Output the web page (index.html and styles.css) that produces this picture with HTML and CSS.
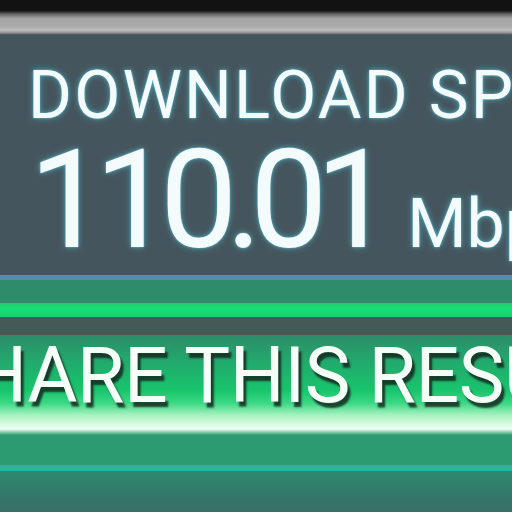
FILE: index.html
```html
<!DOCTYPE html>
<html>
<head>
<meta charset="utf-8">
<link rel="stylesheet" href="styles.css">
</head>
<body>
<div class="screen">
  <div class="topbar"></div>
  <div class="greyband"></div>
  <div class="panel">
    <div class="label">DOWNLOAD SPEED</div>
    <div class="value"><span class="num">110.01</span><span class="unit">Mbps</span></div>
  </div>
  <div class="blue-line"></div>
  <div class="green-band"></div>
  <div class="bright-band"></div>
  <div class="gap"></div>
  <div class="share">
    <div class="share-text">SHARE THIS RESULT</div>
  </div>
  <div class="share-lower"></div>
  <div class="teal-line"></div>
  <div class="footer"></div>
</div>
</body>
</html>
```

FILE: styles.css
```css
html, body {
  margin: 0;
  padding: 0;
  width: 512px;
  height: 512px;
  overflow: hidden;
  background: #111;
}
.screen {
  width: 512px;
  height: 512px;
  overflow: hidden;
  display: flex;
  flex-direction: column;
  font-family: Roboto, "Liberation Sans", sans-serif;
}
.topbar {
  height: 11px;
  background: #121212;
  flex: none;
}
.greyband {
  height: 24px;
  flex: none;
  background: linear-gradient(#1c1c1c 0%, #6a6a6a 14%, #a6a6a6 32%, #aaaaaa 65%, #bdbdbd 80%, #8c8c8c 92%, #3e4c52 100%);
}
.panel {
  height: 240px;
  flex: none;
  background: #45555d;
  box-sizing: border-box;
  padding: 27px 0 0 28px;
  color: #f4fbfc;
  white-space: nowrap;
}
.label {
  font-size: 67px;
  line-height: 67px;
  letter-spacing: 2.2px;
  text-shadow: 0 0 6px rgba(80, 190, 210, 0.75), 0 0 2px rgba(120, 210, 230, 0.8);
}
.value {
  display: flex;
  align-items: baseline;
  line-height: 143px;
  text-shadow: 0 0 6px rgba(80, 190, 210, 0.75), 0 0 2px rgba(120, 210, 230, 0.8);
}
.num {
  font-size: 138px;
  letter-spacing: -12px;
  margin-left: 1px;
}
.unit {
  font-size: 68px;
  margin-left: 26px;
}
.blue-line {
  height: 5px;
  flex: none;
  background: #4b90ae;
}
.green-band {
  height: 23px;
  flex: none;
  background: #2e8b6c;
}
.bright-band {
  height: 14px;
  flex: none;
  background: linear-gradient(#1fcf6e, #12e074 50%, #1ad070);
}
.gap {
  height: 18px;
  flex: none;
  background: #465957;
}
.share {
  height: 100px;
  flex: none;
  background: linear-gradient(#2d8c6a 0%, #22a86c 25%, #18c46c 55%, #3ad884 68%, #a6f2bc 80%, #f2fff4 94%, #2aa072 100%);
  overflow: hidden;
}
.share-text {
  margin-left: -73px;
  padding-top: 6px;
  font-size: 77px;
  line-height: 70px;
  letter-spacing: -0.5px;
  color: #f5fff8;
  white-space: nowrap;
  text-shadow: 3px 5px 2px rgba(20, 40, 30, 0.85);
}
.share-lower {
  height: 30px;
  flex: none;
  background: #2c9b71;
}
.teal-line {
  height: 6px;
  flex: none;
  background: #2ab29c;
}
.footer {
  flex: 1;
  background: linear-gradient(#2f8a70, #337868 60%, #3a7066);
}
```
